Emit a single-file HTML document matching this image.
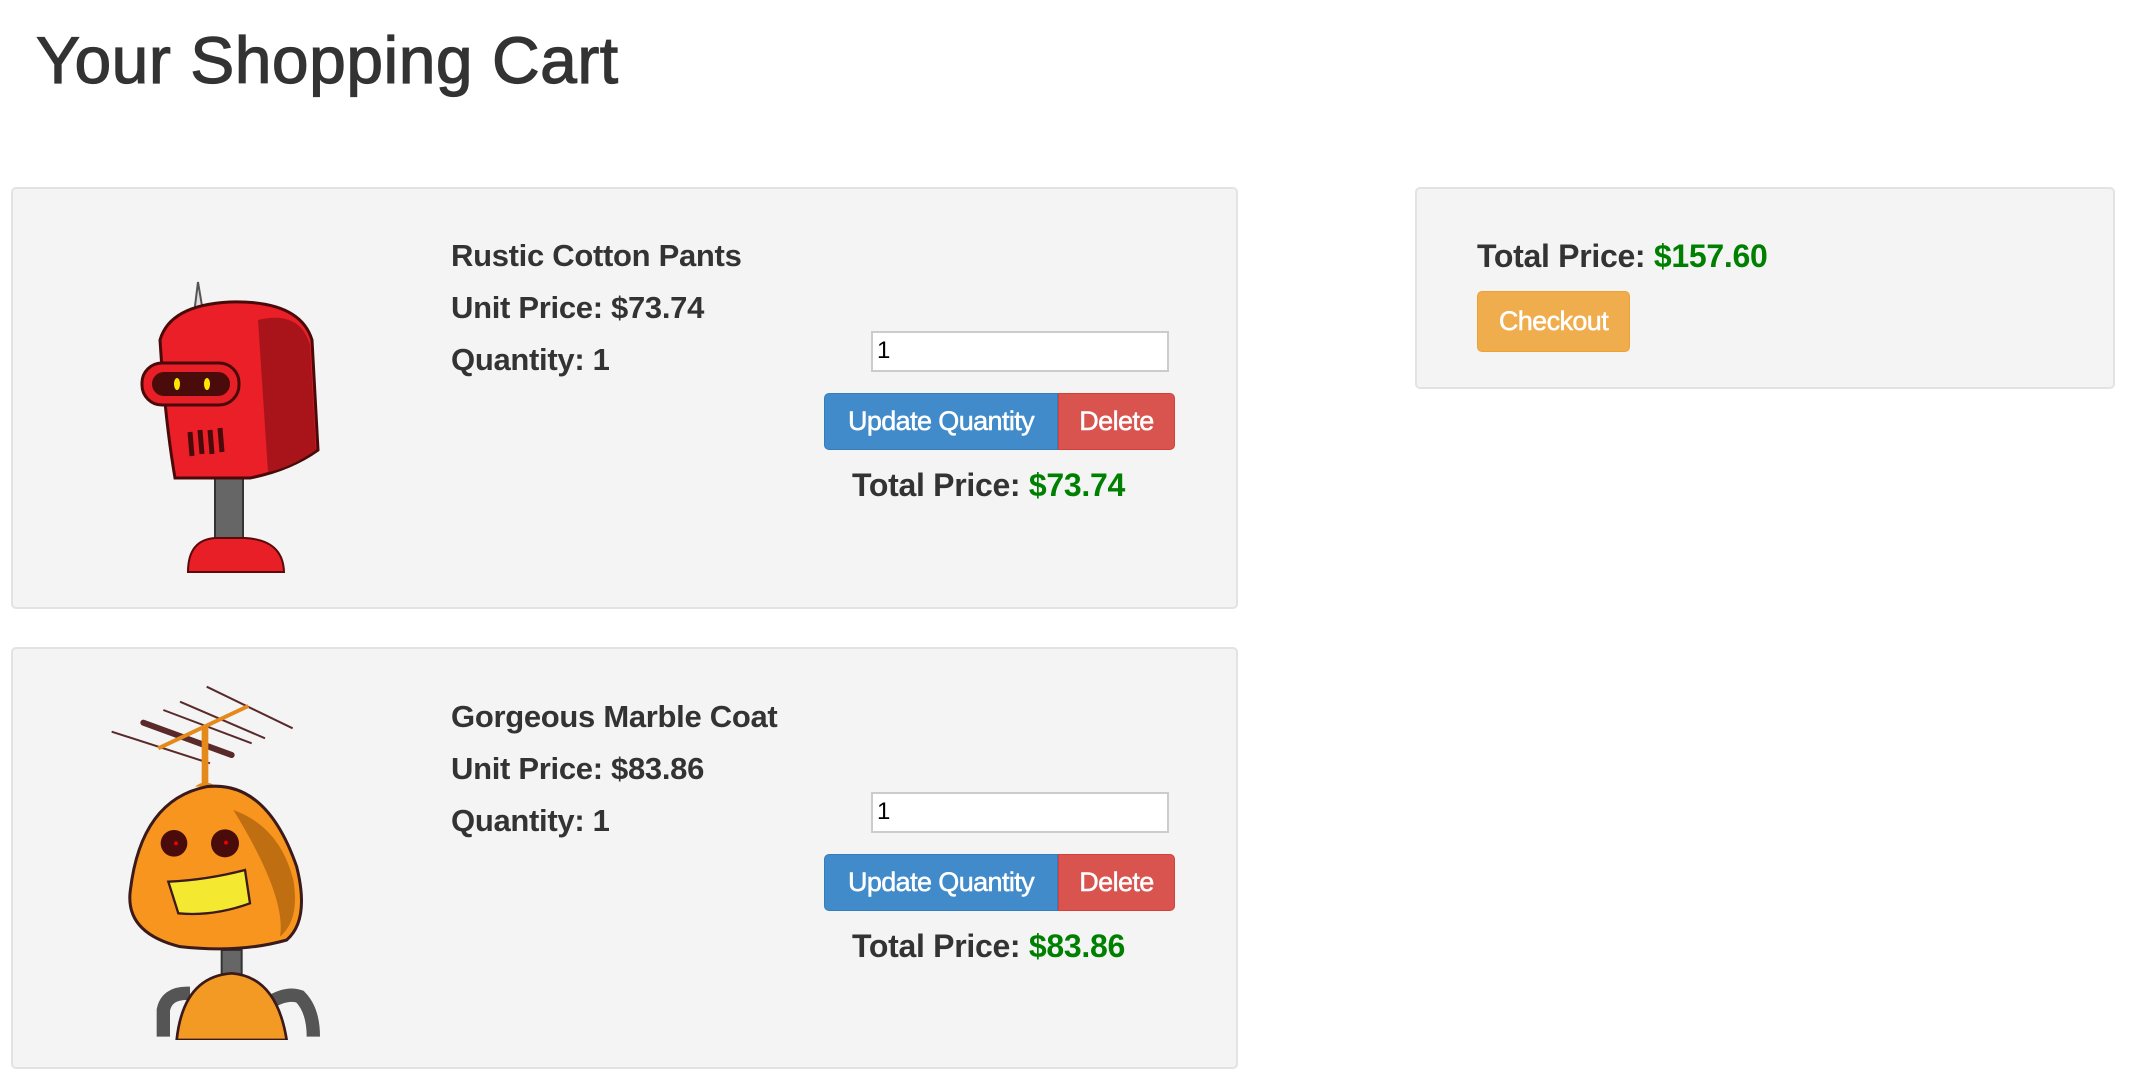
<!DOCTYPE html>
<html><head><meta charset="utf-8"><style>
body{margin:0;background:#fff;font-family:"Liberation Sans",Arial,sans-serif;color:#333;width:2134px;height:1079px;overflow:hidden;position:relative}
.a{position:absolute}
h1{position:absolute;left:36px;top:22px;margin:0;font-weight:normal;-webkit-text-stroke:1.2px #333;font-size:66px;color:#333;letter-spacing:0.5px}
.panel{position:absolute;background:#f4f4f4;border:2px solid #e3e3e3;border-radius:5px;box-sizing:border-box}
.t{position:absolute;font-size:31px;white-space:nowrap;font-weight:bold;letter-spacing:-0.3px}
.inp{position:absolute;background:#fff;border:2px solid #ccc;box-sizing:border-box;font-size:24px;padding-left:4px;line-height:36px;color:#000}
.btn{position:absolute;color:#fff;font-size:27px;text-align:center;box-sizing:border-box;-webkit-text-stroke:0.5px #fff;letter-spacing:-0.6px}
.g{color:#008000}
</style></head><body>
<h1>Your Shopping Cart</h1>

<div class="panel" style="left:11px;top:187px;width:1227px;height:422px"></div>
<div class="panel" style="left:11px;top:647px;width:1227px;height:422px"></div>
<div class="panel" style="left:1415px;top:187px;width:700px;height:202px"></div>

<!-- item 1 -->
<svg class="a" style="left:130px;top:275px" width="210" height="300" viewBox="130 275 210 300">
<path d="M198 282 L192 330 L206 330 Z" fill="#ddd" stroke="#555" stroke-width="2"/>
<ellipse cx="199" cy="330" rx="14" ry="6" fill="#c9151c" stroke="#5a0a0a" stroke-width="2"/>
<rect x="215" y="470" width="28" height="85" rx="8" fill="#666" stroke="#333" stroke-width="2"/>
<path d="M188 572 Q188 540 215 538 L245 538 Q283 540 284 572 Z" fill="#e81f26" stroke="#5a0a0a" stroke-width="2"/>
<path d="M160 340 Q170 305 230 302 Q300 300 312 340 L318 450 Q290 470 250 478 L175 478 Q165 420 160 340 Z" fill="#ea1f27" stroke="#4a0a0a" stroke-width="3"/>
<path d="M258 320 Q300 310 310 345 L316 450 Q290 468 268 472 Z" fill="#a9141b"/>
<rect x="142" y="363" width="97" height="42" rx="20" fill="#e81f26" stroke="#4a0a0a" stroke-width="3"/>
<rect x="152" y="372" width="78" height="24" rx="12" fill="#4a0b0b"/>
<ellipse cx="177" cy="384" rx="3" ry="6" fill="#ffe600"/><ellipse cx="207" cy="384" rx="3" ry="6" fill="#ffe600"/>
<g stroke="#4a0a0a" stroke-width="5"><line x1="190" y1="432" x2="192" y2="456"/><line x1="200" y1="430" x2="202" y2="454"/><line x1="210" y1="430" x2="212" y2="454"/><line x1="220" y1="428" x2="222" y2="452"/></g>
</svg>
<div class="t" style="left:451px;top:238px">Rustic Cotton Pants</div>
<div class="t" style="left:451px;top:290px">Unit Price: $73.74</div>
<div class="t" style="left:451px;top:342px">Quantity: 1</div>
<div class="inp" style="left:871px;top:331px;width:298px;height:41px">1</div>
<div class="btn" style="left:824px;top:393px;width:234px;height:57px;line-height:55px;background:#428bca;border:1px solid #357ebd;border-radius:5px 0 0 5px">Update Quantity</div>
<div class="btn" style="left:1058px;top:393px;width:117px;height:57px;line-height:55px;background:#d9534f;border:1px solid #d43f3a;border-radius:0 5px 5px 0">Delete</div>
<div class="t" style="left:852px;top:467px;font-size:32px">Total Price: <span class="g">$73.74</span></div>

<!-- item 2 -->
<svg class="a" style="left:100px;top:680px" width="250" height="360" viewBox="0 0 750 1080">
<g stroke="#5a2a2a" stroke-width="6"><line x1="35" y1="155" x2="330" y2="250"/><line x1="190" y1="90" x2="455" y2="190"/><line x1="240" y1="65" x2="495" y2="175"/><line x1="320" y1="20" x2="578" y2="145"/></g>
<line x1="130" y1="128" x2="395" y2="225" stroke="#5a2a2a" stroke-width="18" stroke-linecap="round"/>
<line x1="175" y1="205" x2="445" y2="78" stroke="#e58a1a" stroke-width="12"/>
<rect x="305" y="140" width="20" height="170" fill="#e58a1a"/>
<path d="M285 320 Q315 295 350 320 Z" fill="#e58a1a"/>
<rect x="365" y="810" width="60" height="90" fill="#666" stroke="#333" stroke-width="6"/>
<path d="M190 1070 L190 990 Q200 940 260 940 L270 940 M505 970 Q560 935 600 950 Q640 990 640 1070" fill="none" stroke="#555" stroke-width="40"/>
<path d="M230 1080 Q250 890 395 880 Q530 890 560 1080 Z" fill="#f39a24" stroke="#3a1a1a" stroke-width="8"/>
<path d="M320 320 Q500 300 590 560 Q630 720 560 780 Q420 820 240 800 Q80 760 90 640 Q120 360 320 320 Z" fill="#f7951e" stroke="#3a1a1a" stroke-width="9"/>
<path d="M400 390 Q540 440 580 600 Q600 720 540 770 Q560 650 400 390 Z" fill="#c06e12"/>
<circle cx="222" cy="490" r="40" fill="#4a0b0b"/><circle cx="375" cy="490" r="42" fill="#4a0b0b"/>
<circle cx="228" cy="490" r="6" fill="#e00"/><circle cx="378" cy="488" r="6" fill="#e00"/>
<path d="M205 605 Q320 600 435 570 L450 670 Q340 710 235 700 Z" fill="#f4e830" stroke="#3a1a1a" stroke-width="7"/>
</svg>
<div class="t" style="left:451px;top:699px">Gorgeous Marble Coat</div>
<div class="t" style="left:451px;top:751px">Unit Price: $83.86</div>
<div class="t" style="left:451px;top:803px">Quantity: 1</div>
<div class="inp" style="left:871px;top:792px;width:298px;height:41px">1</div>
<div class="btn" style="left:824px;top:854px;width:234px;height:57px;line-height:55px;background:#428bca;border:1px solid #357ebd;border-radius:5px 0 0 5px">Update Quantity</div>
<div class="btn" style="left:1058px;top:854px;width:117px;height:57px;line-height:55px;background:#d9534f;border:1px solid #d43f3a;border-radius:0 5px 5px 0">Delete</div>
<div class="t" style="left:852px;top:928px;font-size:32px">Total Price: <span class="g">$83.86</span></div>

<!-- summary -->
<div class="t" style="left:1477px;top:238px;font-size:32px">Total Price: <span class="g">$157.60</span></div>
<div class="btn" style="left:1477px;top:291px;width:153px;height:61px;line-height:59px;background:#f0ad4e;border:1px solid #eea236;border-radius:5px">Checkout</div>
</body></html>
